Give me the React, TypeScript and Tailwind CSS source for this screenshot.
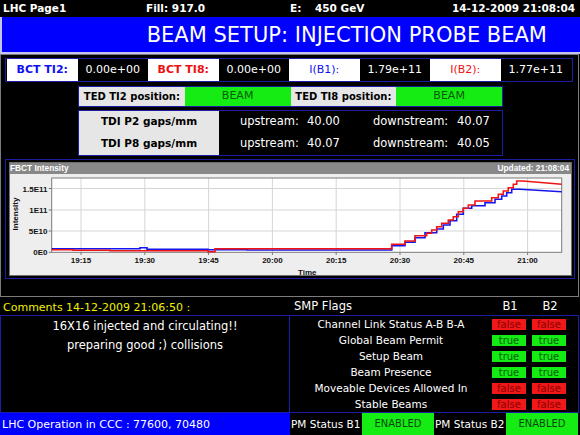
import React from "react";

const RED =
  "M51.7 249.7 H73 V250.3 H110 V250.7 H208 V251.7 H215 V248.7 H391.7 V244.3 H405 V241 H415 V235.7 H426.7 V233.3 H431.7 V230 H436.7 V226.7 H441.7 V223.3 H448.3 V220 H453.3 V216.7 H458.3 V211.7 H463.3 V208.3 H468.3 V205 H475 V201 H491.7 V197.7 H498.3 V194.3 H503.3 V191 H508.3 V187.7 H513.3 V184.3 H516.7 V181 H523 L561.7 184.3";
const BLUE =
  "M51.7 248.7 H140 V247.7 H147 V249.3 H208 V249.7 H247 V250 H391.7 V245.7 H405 V242.3 H415 V237.7 H425 V232.7 H436.7 V229 H443.3 V225 H450 V220.7 H456.7 V214.3 H463.3 V208.3 H471.7 V205.7 H485 V202.7 H495 V199.3 H501.7 V196 H506.7 V192.7 H511.7 V189.3 H520 L561.7 191.7";

const XT = ["19:15", "19:30", "19:45", "20:00", "20:15", "20:30", "20:45", "21:00"];
const YT: [string, number][] = [
  ["1.5E11", 188.5],
  ["1E11", 210],
  ["5E10", 231],
  ["0E0", 252.3],
];

function Chart() {
  return (
    <svg width="561" height="101" viewBox="0 0 561 101" className="block">
      <g transform="translate(-10 -174)" fontFamily="'Liberation Sans', Arial, sans-serif" fontWeight="bold" fontSize="8" fill="#111">
        <rect x="51.7" y="178" width="510" height="74.3" fill="#ffffff" />
        {XT.map((t, i) => {
          const x = 81 + 63.8 * i;
          return (
            <g key={t}>
              <line x1={x} y1="178" x2={x} y2="252.3" stroke="#d6d6d6" strokeWidth="1" />
              <line x1={x} y1="252.3" x2={x} y2="255" stroke="#777" strokeWidth="1" />
              <text x={x} y="263" textAnchor="middle">{t}</text>
            </g>
          );
        })}
        {YT.map(([l, y]) => (
          <g key={l}>
            {y < 250 && <line x1="51.7" y1={y} x2="561.7" y2={y} stroke="#d6d6d6" strokeWidth="1" />}
            <line x1="48.7" y1={y} x2="51.7" y2={y} stroke="#777" strokeWidth="1" />
            <text x="47.5" y={y + 3} textAnchor="end">{l}</text>
          </g>
        ))}
        <rect x="51.7" y="178" width="510" height="74.3" fill="none" stroke="#7a7a7a" strokeWidth="1" />
        <path d={BLUE} fill="none" stroke="#1515ee" strokeWidth="1.6" />
        <path d={RED} fill="none" stroke="#ee1515" strokeWidth="1.6" />
        <text x="298" y="274.5">Time</text>
        <text x="18" y="214" transform="rotate(-90 18 214)" textAnchor="middle">Intensity</text>
      </g>
    </svg>
  );
}

function Flag({ v }: { v: boolean }) {
  return v ? (
    <div className="w-[34px] h-[11px] bg-[#14ec14] text-[#0a5a0a] text-[10px] leading-[11px] text-center">true</div>
  ) : (
    <div className="w-[34px] h-[11px] bg-[#f01818] text-[#8c0000] text-[10px] leading-[11px] text-center">false</div>
  );
}

const FLAGS: [string, boolean, boolean][] = [
  ["Channel Link Status A-B B-A", false, false],
  ["Global Beam Permit", true, true],
  ["Setup Beam", true, true],
  ["Beam Presence", true, true],
  ["Moveable Devices Allowed In", false, false],
  ["Stable Beams", false, false],
];

export default function App() {
  return (
    <div className="w-[580px] h-[435px] bg-black overflow-hidden font-['DejaVu_Sans',Verdana,sans-serif] text-white">
      {/* top bar */}
      <div className="h-[17px] grid grid-cols-[146px_144px_145px_145px] items-center text-[10.5px] font-bold leading-none">
        <div className="pl-[3px]">LHC Page1</div>
        <div>Fill: 917.0</div>
        <div className="flex">
          <span className="w-[25px]">E:</span>
          <span>450 GeV</span>
        </div>
        <div className="text-right pr-[5px]">14-12-2009 21:08:04</div>
      </div>

      {/* title */}
      <div className="h-[37px] bg-[#0000ff] border-l-2 border-b-2 border-[#c4c4ec] flex items-center justify-end pr-[33px] pt-[2px] text-[21px] leading-none">
        BEAM SETUP: INJECTION PROBE BEAM
      </div>

      {/* middle frame */}
      <div className="h-[243px] w-[579px] border border-[#7c7c7c] flex flex-col">
        {/* BCT row */}
        <div className="ml-[4px] mt-[3px] w-[568px] h-[24px] border border-[#1c1ca4] px-[1px] grid grid-cols-8 text-[11px]">
          <div className="bg-white text-[#1010ee] font-bold flex items-center justify-center">BCT TI2:</div>
          <div className="flex items-center justify-center">0.00e+00</div>
          <div className="bg-white text-[#ee1010] font-bold flex items-center justify-center">BCT TI8:</div>
          <div className="flex items-center justify-center">0.00e+00</div>
          <div className="bg-white text-[#1010ee] text-[11px] flex items-center justify-center">I(B1):</div>
          <div className="flex items-center justify-center">1.79e+11</div>
          <div className="bg-white text-[#ee1010] text-[11px] flex items-center justify-center">I(B2):</div>
          <div className="flex items-center justify-center">1.77e+11</div>
        </div>

        {/* TED row */}
        <div className="ml-[77px] mt-[4px] w-[425px] h-[21px] border border-[#1c1ca4] grid grid-cols-4">
          <div className="bg-[#e6e6e6] text-black font-bold text-[10px] flex items-center justify-center">TED TI2 position:</div>
          <div className="bg-[#14ec14] text-[#0a5a0a] text-[11px] flex items-center justify-center">BEAM</div>
          <div className="bg-[#e6e6e6] text-black font-bold text-[10px] flex items-center justify-center">TED TI8 position:</div>
          <div className="bg-[#14ec14] text-[#0a5a0a] text-[11px] flex items-center justify-center">BEAM</div>
        </div>

        {/* TDI box */}
        <div className="ml-[77px] mt-[3px] w-[425px] h-[46px] border border-[#1c1ca4] flex">
          <div className="w-[140px] bg-[#e6e6e6] text-black font-bold text-[10.5px] flex flex-col">
            <div className="h-[22px] flex items-center justify-center">TDI P2 gaps/mm</div>
            <div className="h-[22px] flex items-center justify-center">TDI P8 gaps/mm</div>
          </div>
          <div className="flex flex-col text-[11.5px] pl-[21px]">
            <div className="h-[22px] flex items-center">
              <span className="w-[67px]">upstream:</span>
              <span className="w-[66px]">40.00</span>
              <span className="w-[84px]">downstream:</span>
              <span>40.07</span>
            </div>
            <div className="h-[22px] flex items-center">
              <span className="w-[67px]">upstream:</span>
              <span className="w-[66px]">40.07</span>
              <span className="w-[84px]">downstream:</span>
              <span>40.05</span>
            </div>
          </div>
        </div>

        {/* chart */}
        <div className="ml-[4px] mt-[3px] w-[570px] h-[120px] border border-[#1c1ca4] pl-[3px] pt-[2px] pr-[2px] pb-[2px]">
          <div className="w-[563px] h-[114px] border border-[#6e6e6e] bg-[#eeeeee] flex flex-col">
            <div className="h-[11px] bg-[#888888] flex justify-between items-center pr-[2px] text-[8.3px] font-bold leading-none font-['Liberation_Sans',Arial,sans-serif]">
              <span>FBCT Intensity</span>
              <span>Updated: 21:08:04</span>
            </div>
            <Chart />
          </div>
        </div>
      </div>

      {/* comments / smp header */}
      <div className="h-[18px] flex items-center pt-[2px] leading-none">
        <div className="w-[290px] pl-[3px] text-[11px] text-[#f0f000]">Comments 14-12-2009 21:06:50 :</div>
        <div className="w-[203px] pl-[4px] text-[11.5px]">SMP Flags</div>
        <div className="w-[34px] text-center text-[11.5px]">B1</div>
        <div className="w-[34px] ml-[6px] text-center text-[11.5px]">B2</div>
      </div>

      {/* comments / smp boxes */}
      <div className="h-[98px] flex">
        <div className="w-[290px] h-[98px] border border-[#1c1ca4] text-center text-[11.5px] leading-[19px] pt-[1px]">
          <div>16X16 injected and circulating!!</div>
          <div>preparing good ;) collisions</div>
        </div>
        <div className="w-[289px] h-[98px] border border-l-0 border-[#1c1ca4] flex flex-col">
          {FLAGS.map(([l, a, b]) => (
            <div key={l} className="h-[16px] flex items-center">
              <div className="w-[202px] text-center text-[10.5px] leading-none">{l}</div>
              <Flag v={a} />
              <div className="w-[6px]" />
              <Flag v={b} />
            </div>
          ))}
        </div>
      </div>

      {/* bottom bar */}
      <div className="h-[22px] flex leading-none">
        <div className="w-[290px] bg-[#0000ff] pl-[2px] text-[11px] flex items-center">LHC Operation in CCC : 77600, 70480</div>
        <div className="w-[72px] text-[10.5px] flex items-center pl-[1px]">PM Status B1</div>
        <div className="w-[72px] bg-[#14ec14] text-[#0a4a0a] text-[10px] flex items-center justify-center">ENABLED</div>
        <div className="w-[72px] text-[10.5px] flex items-center pl-[1px]">PM Status B2</div>
        <div className="w-[72px] bg-[#14ec14] text-[#0a4a0a] text-[10px] flex items-center justify-center">ENABLED</div>
      </div>
    </div>
  );
}
